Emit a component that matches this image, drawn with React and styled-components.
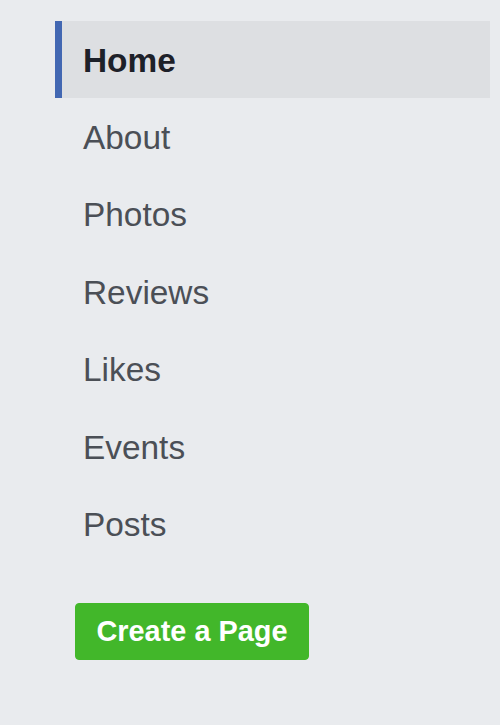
import React from "react";
import styled, { createGlobalStyle } from "styled-components";

const Global = createGlobalStyle`
  html, body { margin: 0; padding: 0; background: #e9ebee; }
  body { font-family: "Liberation Sans", Arial, Helvetica, sans-serif; }
`;

const Sidebar = styled.nav`
  display: flex;
  flex-direction: column;
  width: 435px;
  margin-left: 55px;
  padding-top: 21px;
`;

const List = styled.ul`
  list-style: none;
  margin: 0;
  padding: 0;
  display: flex;
  flex-direction: column;
`;

const Item = styled.li`
  height: 77.4px;
  display: flex;
  align-items: center;
  box-sizing: border-box;
  padding-left: ${(p) => (p.$active ? "21px" : "28px")};
  padding-top: 2px;
  border-left: ${(p) => (p.$active ? "7px solid #4267b2" : "none")};
  background: ${(p) => (p.$active ? "#dddfe2" : "transparent")};
  color: ${(p) => (p.$active ? "#1d2129" : "#4b4f56")};
  font-size: 33.4px;
  font-weight: ${(p) => (p.$active ? 700 : 400)};
`;

const CreateButton = styled.button`
  margin-top: 40px;
  margin-left: 20px;
  width: 234px;
  height: 57px;
  border: 1px solid #42b72a;
  border-radius: 4px;
  background: #42b72a;
  color: #ffffff;
  font-family: "Liberation Sans", Arial, Helvetica, sans-serif;
  font-size: 28.9px;
  font-weight: 700;
  padding: 0;
  display: flex;
  align-items: center;
  justify-content: center;
  cursor: pointer;
`;

const items = ["Home", "About", "Photos", "Reviews", "Likes", "Events", "Posts"];

export default function App() {
  return (
    <>
      <Global />
      <Sidebar>
        <List>
          {items.map((label, i) => (
            <Item key={label} $active={i === 0}>
              {label}
            </Item>
          ))}
        </List>
        <CreateButton>Create a Page</CreateButton>
      </Sidebar>
    </>
  );
}
